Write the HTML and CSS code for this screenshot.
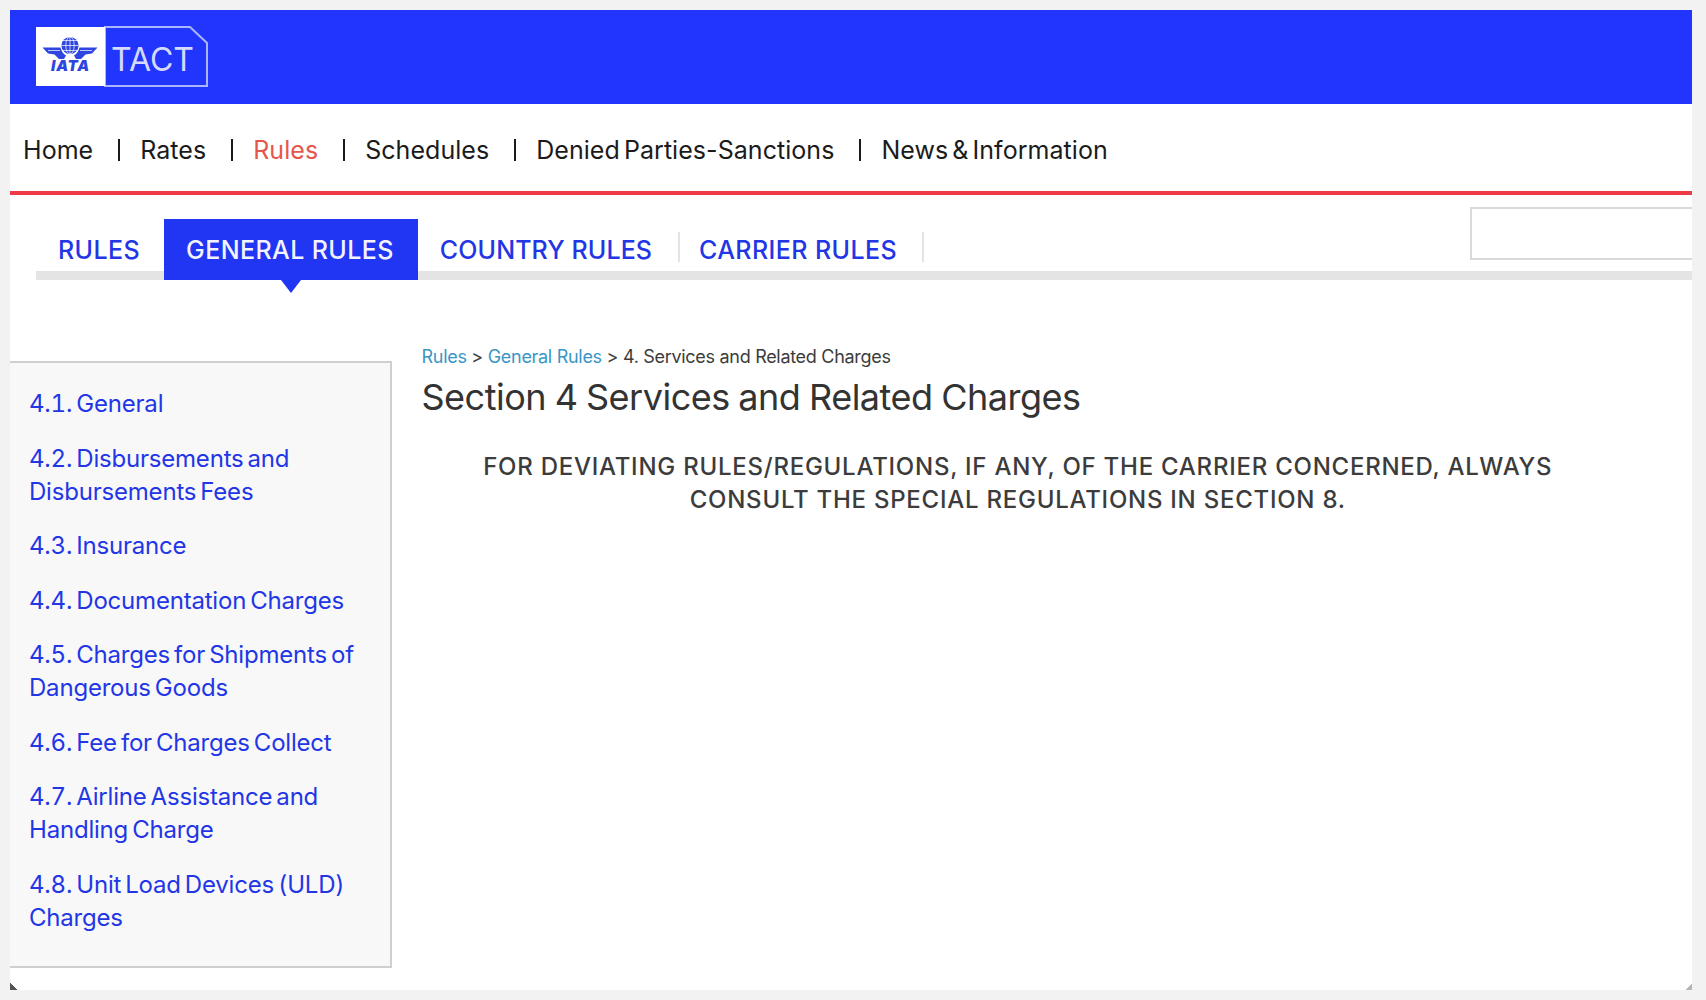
FILE: index.html
```html
<!DOCTYPE html>
<html lang="en">
<head>
<meta charset="utf-8">
<title>TACT Rules</title>
<link rel="stylesheet" href="styles.css">
</head>
<body>
<div class="frame">
  <header class="topbar">
    <svg class="logo" width="174" height="62" viewBox="0 0 174 62" aria-label="IATA TACT">
      <path d="M70 1H155L172 17V60H70Z" fill="none" stroke="#aab5ff" stroke-width="2"/>
      <rect x="1" y="1" width="69" height="59" fill="#fff"/>
      <circle cx="35" cy="19.5" r="8.6" fill="#2f45e0"/>
      <path d="M26.5 19.5H43.5M35 11V28M28 14.5H42M28 24.5H42" stroke="#fff" stroke-width=".7" fill="none"/>
      <ellipse cx="35" cy="19.5" rx="4.2" ry="8.6" fill="none" stroke="#fff" stroke-width=".7"/>
      <path d="M7.500 21.500H25.500C26.500 25.500 28.500 28 31 29.500L29 33H24L19.500 28.500L13 27.500Z" fill="#2f45e0"/>
      <path d="M62.500 21.500H44.500C43.500 25.500 41.500 28 39 29.500L41 33H46L50.500 28.500L57 27.500Z" fill="#2f45e0"/>
      <path d="M13 24.500H25M45 24.500H57" stroke="#fff" stroke-width=".7" fill="none"/>
      <text x="35.500" y="45" class="logo-iata" text-anchor="middle">IATA</text>
      <text x="76" y="45" class="logo-tact">TACT</text>
    </svg>
  </header>

  <nav class="mainnav">
    <a class="mainnav-link" href="#">Home</a><span class="mainnav-sep"></span>
    <a class="mainnav-link" href="#">Rates</a><span class="mainnav-sep"></span>
    <a class="mainnav-link is-current" href="#">Rules</a><span class="mainnav-sep"></span>
    <a class="mainnav-link" href="#">Schedules</a><span class="mainnav-sep"></span>
    <a class="mainnav-link" href="#">Denied Parties-Sanctions</a><span class="mainnav-sep"></span>
    <a class="mainnav-link" href="#">News &amp; Information</a>
  </nav>

  <div class="tabbar">
    <div class="tabs">
      <a class="tab" href="#">RULES</a>
      <a class="tab is-active" href="#">GENERAL RULES</a>
      <a class="tab has-divider tab-country" href="#">COUNTRY RULES</a>
      <a class="tab has-divider tab-carrier" href="#">CARRIER RULES</a>
    </div>
    <input class="search" type="text" aria-label="Search">
  </div>

  <div class="content">
    <aside class="sidebar">
      <a class="side-link" href="#">4.1. General</a>
      <a class="side-link" href="#">4.2. Disbursements and Disbursements Fees</a>
      <a class="side-link" href="#">4.3. Insurance</a>
      <a class="side-link" href="#">4.4. Documentation Charges</a>
      <a class="side-link" href="#">4.5. Charges for Shipments of Dangerous Goods</a>
      <a class="side-link" href="#">4.6. Fee for Charges Collect</a>
      <a class="side-link" href="#">4.7. Airline Assistance and Handling Charge</a>
      <a class="side-link" href="#">4.8. Unit Load Devices (ULD) Charges</a>
    </aside>
    <main class="article">
      <div class="crumbs"><a href="#">Rules</a> &gt; <a href="#">General Rules</a> &gt; 4. Services and Related Charges</div>
      <h1 class="title">Section 4 Services and Related Charges</h1>
      <p class="notice">FOR DEVIATING RULES/REGULATIONS, IF ANY, OF THE CARRIER CONCERNED, ALWAYS CONSULT THE SPECIAL REGULATIONS IN SECTION 8.</p>
    </main>
  </div>
</div>
</body>
</html>
```
FILE: styles.css
```css
* { box-sizing: border-box; }
html, body { margin: 0; height: 100%; }
body {
  background: #f2f2f2;
  padding: 10px;
  font-family: Inter, "Liberation Sans", sans-serif;
  overflow: hidden;
}
a { text-decoration: none; }
.frame {
  position: relative;
  width: 1682px;
  height: 980px;
  background: #fff;
}
.frame::before, .frame::after {
  content: "";
  position: absolute;
  bottom: 0;
  width: 7px;
  height: 7px;
}
.frame::before { left: 0; background: linear-gradient(45deg, #555 50%, transparent 50%); }
.frame::after { right: 0; background: linear-gradient(-45deg, #b5b5b5 50%, transparent 50%); }

.topbar {
  height: 94px;
  background: #2135fc;
  padding: 16px 0 0 25px;
}
.logo { display: block; }
.logo-iata { font: italic 900 15px Inter, sans-serif; letter-spacing: .8px; fill: #2f45e0; }
.logo-tact { font: 400 32px Inter, sans-serif; fill: #d5daff; letter-spacing: 0; }

.mainnav {
  height: 91px;
  border-bottom: 4px solid #ef3b45;
  padding: 4px 0 0 13px;
  display: flex;
  align-items: center;
}
.mainnav-link { font-size: 25px; letter-spacing: .05px; word-spacing: -3px; color: #1b1b1b; }
.mainnav-link.is-current { color: #e4574c; }
.mainnav-sep {
  width: 2px;
  height: 22px;
  background: #1b1b1b;
  margin: 0 20px 0 25px;
}

.tabbar {
  height: 145px;
  position: relative;
  padding: 24px 0 0 26px;
}
.tabs {
  display: flex;
  height: 61px;
  border-bottom: 9px solid #e4e4e4;
}
.tab {
  font-size: 25px;
  font-weight: 500;
  letter-spacing: .4px;
  color: #2236e6;
  height: 52px;
  padding: 0 24px 0 22px;
  line-height: 62px;
  position: relative;
}
.tab.is-active {
  background: #2036f2;
  color: #f2f3ff;
  height: 61px;
}
.tab.is-active::after {
  content: "";
  position: absolute;
  left: 50%;
  bottom: -13px;
  margin-left: -10px;
  border-style: solid;
  border-width: 13px 10px 0;
  border-color: #2036f2 transparent transparent;
}
.tab.has-divider::after {
  content: "";
  position: absolute;
  right: 0;
  top: 13px;
  height: 30px;
  width: 2px;
  background: #e4e4e4;
}
.tab-country { letter-spacing: .1px; padding-right: 28px; }
.tab-carrier { padding-left: 19px; padding-right: 27px; }
.search {
  position: absolute;
  top: 12px;
  right: 0;
  width: 222px;
  height: 53px;
  border: 2px solid #d9d9d9;
  border-right: 0;
  background: #fff;
}

.content {
  display: flex;
}
.sidebar {
  width: 382px;
  height: 607px;
  margin-top: 21px;
  background: #f8f8f9;
  border: 2px solid #cfcfcf;
  border-left: 0;
  padding: 24px 20px 0 19px;
  display: flex;
  flex-direction: column;
  gap: 21.5px;
}
.side-link {
  font-size: 24px;
  line-height: 33px;
  letter-spacing: -.2px;
  word-spacing: -2.2px;
  font-variant-numeric: tabular-nums;
  color: #2236e6;
}
.article {
  flex: 1;
  padding: 5.5px 78px 0 29.500px;
}
.crumbs {
  font-size: 18px;
  line-height: 22px;
  letter-spacing: -.3px;
  color: #3c3c3c;
}
.crumbs a { color: #3a96c4; }
.title {
  font-size: 36px;
  font-weight: 400;
  line-height: 44px;
  letter-spacing: -.5px;
  word-spacing: -1px;
  color: #333;
  margin: 7px 0 0;
}
.notice {
  font-size: 24px;
  font-weight: 500;
  line-height: 33px;
  letter-spacing: .75px;
  color: #3c3c3c;
  text-align: center;
  margin: 31px 0 0;
  padding: 0 20px;
}
```
